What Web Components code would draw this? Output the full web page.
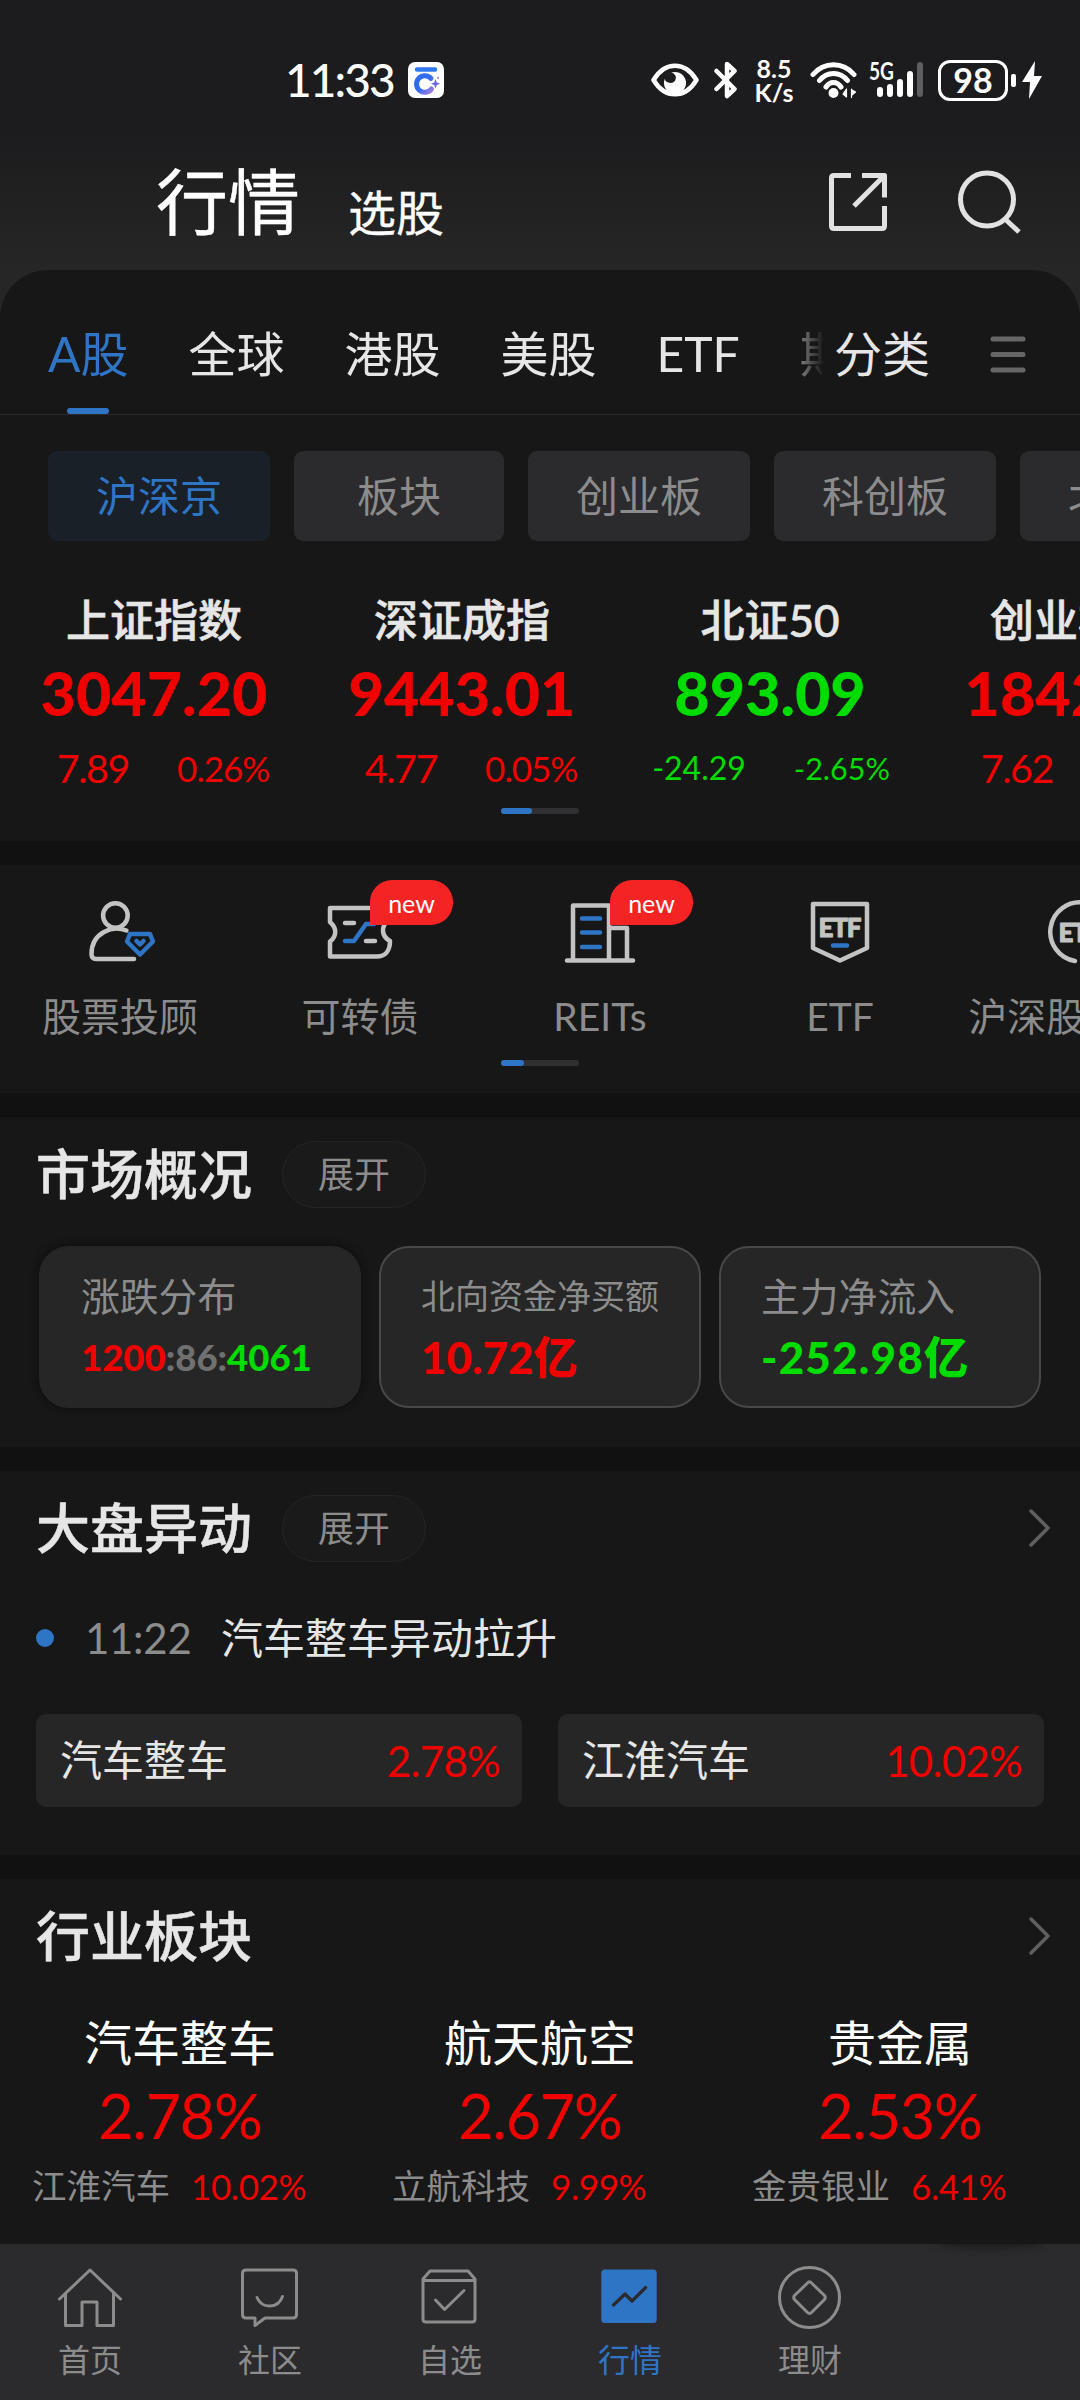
<!DOCTYPE html>
<html lang="zh-CN">
<head>
<meta charset="UTF-8">
<title>行情</title>
<style>
    :root {
        --panel: #171717;
        --gap: #111111;
        --card: #262626;
        --bar: #2b2b2d;
        --blue: #2f75c6;
        --red: #f10000;
        --green: #00dc00;
        --text: #e6e6e6;
        --muted: #8c8c8c;
    }

    body {
        margin: 0;
        width: 1080px;
        height: 2400px;
        overflow: hidden;
        background: var(--gap);
        color: var(--text);
        font-family: Lato, "Noto Sans CJK SC", sans-serif;
    }
</style>
</head>
<body>
<market-app></market-app>

<script>
/**
 * Registers a custom element whose shadow root is cloned from a template
 */
function define(name, html, setup) {
    const template = document.createElement("template");
    template.innerHTML = `
        <style>
            *, :host { box-sizing: border-box; }
            svg { display: block; fill: none; stroke-linecap: round; stroke-linejoin: round; flex: none; }
        </style>
        ${html}
    `;

    customElements.define(name, class extends HTMLElement {
        constructor() {
            super();
            const shadow = this.attachShadow({ mode: "open" });
            shadow.append(template.content.cloneNode(true));
        }

        connectedCallback() {
            if (setup) setup(this, this.shadowRoot);
        }
    });
}

// icons for the quick actions, 72 x 64
const actionIcons = {
    advisor: `
        <circle cx="31.4" cy="15.5" r="12.3"/>
        <path d="M42.5 30.5C36 28 27 28 20 32C10 37.500 7.500 46 7.500 54Q7.500 59 12 59H50"/>
        <path class="blue" d="M46 34H66L69 41.500L56 54.500L43 41.500Z"/>
        <path class="blue" d="M52.500 41L56 44.500L59.500 41"/>`,
    bond: `
        <path d="M6 8H64V20C57 27 57 36 66 41C66 51 61 56.500 53 56.500H6V41.500C13 36 13 28 6 22Z"/>
        <path d="M21 23H30M42 41H51"/>
        <path class="blue" d="M21 41H30L42 24H50"/>`,
    reits: `
        <path d="M3 60.500H69M9 60V5.500H45V60M45 28H63V60"/>
        <path class="blue" d="M18 18.500H36M18 32.500H36M18 47H36"/>`,
    etf: `
        <path d="M9 4H63V48L36 60.500L9 48Z"/>
        <text x="14.5" y="36.500" textLength="43">ETF</text>
        <path class="blue" d="M29 45.500H43"/>`,
    connect: `
        <path d="M31 61A29.500 29.500 0 1 1 65 36"/>
        <text x="14.5" y="42" textLength="43">ETF</text>`,
};

// icons for the bottom bar, 64 x 64
const navIcons = {
    home: `<path d="M1.500 33L32 4L62.500 33M7.500 27.500V59.500H24V36H39V59.500H55.500V27.500"/>`,
    social: `
        <path d="M8 4H55Q58.500 4 58.500 7.500V48.500Q58.500 52 55 52H27L17 59.500V52H8Q4.500 52 4.500 48.500V7.500Q4.500 4 8 4Z"/>
        <path d="M19 31.500C24 43 40 43 44.500 30.500"/>`,
    watch: `
        <path d="M5 13L12 5H50L57 13V53Q57 56 54 56H8Q5 56 5 53ZM6 14.500H56"/>
        <path d="M17.500 34L26.600 43.500L46 24.500"/>`,
    market: `
        <rect x="3.300" y="3.500" width="55.400" height="53.500" rx="3.500" fill="#2f75c6" stroke="none"/>
        <path d="M15.500 39L27 28L34 35L47.700 21.500" stroke="#2b2b2d" stroke-width="3.200"/>`,
    wealth: `
        <circle cx="31.500" cy="31.500" r="30"/>
        <path d="M29.500 17Q31.500 14.500 33.500 17L46.500 29.500Q48 31.500 46.500 33.500L33.500 46.500Q31.500 48.500 29.500 46.500L16.500 33.500Q15 31.500 16.500 29.500Z"/>`,
};

define("status-bar", `
    <style>
        :host {
            display: flex;
            align-items: center;
            height: 158px;
            padding: 2px 38px 0 285px;
            color: #fff;
        }
        .time { font-size: 46px; line-height: 46px; font-weight: 500; width: 123px; letter-spacing: -1.9px; }
        .icons { display: flex; align-items: center; margin-left: auto; }
        svg { stroke: #fff; }
        .speed { font-size: 25px; line-height: 24px; font-weight: 700; text-align: center; width: 40px; margin: 0 16px; }
        .battery {
            display: flex; align-items: center; justify-content: center;
            width: 70px; height: 41px; border: 3px solid #fff; border-radius: 12px;
            font-size: 34px; line-height: 34px; font-weight: 700;
        }
        .nub { width: 5px; height: 13px; border-radius: 2px; background: #fff; margin: 0 6px 0 3px; }
        text { fill: #fff; stroke: none; font-size: 25px; font-weight: 700; }
    </style>
    <div class="time">11:33</div>
    <svg width="36" height="36" viewBox="0 0 36 36" stroke="none">
        <defs>
            <linearGradient id="g" x1="0" y1="0" x2="1" y2="1">
                <stop offset=".5" stop-color="#2f6cf0"/><stop offset="1" stop-color="#a57be0"/>
            </linearGradient>
        </defs>
        <rect width="36" height="36" rx="7" fill="#fff" stroke="none"/>
        <path d="M9 7.500H27" stroke="#2f78f0" stroke-width="4.500"/>
        <path d="M23 16.500A8.300 8.300 0 1 0 23.500 27" stroke="url(#g)" stroke-width="5"/>
        <path d="M27.500 17L28.800 20.500L32 21.800L28.800 23L27.500 26.500L26.200 23L23 21.800L26.200 20.500ZM30 14.500L31 16L30 17L29 16Z" fill="#6a63dc" stroke="none"/>
    </svg>
    <div class="icons">
        <svg width="48" height="34" viewBox="0 0 48 34" stroke-width="4.5">
            <path d="M2.500 17C14 -2 34 -2 45.500 17C34 36 14 36 2.500 17Z"/>
            <circle cx="24" cy="20" r="11" fill="#fff" stroke="none"/>
            <path d="M13 14L20 9Q27 12 24 18Q20 22 14.500 18Z" fill="#1c1c1e" stroke="none"/>
        </svg>
        <svg width="24" height="38" viewBox="0 0 24 38" stroke-width="4.5" style="margin-left:15px">
            <path d="M2.500 10L20.500 28L13 35V3L20.500 10L2.500 28"/>
        </svg>
        <div class="speed">8.5<br>K/s</div>
        <svg width="47" height="38" viewBox="0 0 47 38" stroke-width="5">
            <path d="M3 13.500C14 .5 33 .5 44 13.500M9.500 19.500C17 10 30 10 37.500 19.500M16 26C20 20 27 20 31 26"/>
            <circle cx="23.500" cy="32" r="5" fill="#fff" stroke="none"/>
            <path d="M36.500 28V36L33 33ZM41.500 28V36.500M42 29L45.500 31L42 34Z" fill="#fff" stroke="#fff" stroke-width="1.200"/>
        </svg>
        <svg width="54" height="40" viewBox="0 0 54 40" stroke-width="6" style="margin:0 15px 0 12px">
            <path d="M11 30V34M21 27V34M31 22V34M41 14V34"/>
            <path d="M51 5V34" stroke="#5e5e60"/>
            <text x="0" y="20" textLength="25" lengthAdjust="spacingAndGlyphs">5G</text>
        </svg>
        <div class="battery">98</div>
        <div class="nub"></div>
        <svg width="20" height="38" viewBox="0 0 20 38" stroke="none">
            <path d="M13 0L0 21H8L7 38L20 15H12Z" fill="#fff" stroke="none"/>
        </svg>
    </div>
`);

define("page-header", `
    <style>
        :host {
            display: flex;
            align-items: flex-end;
            height: 112px;
            padding: 0 58px 33px 156px;
            color: #fff;
        }
        .title { font-size: 72px; line-height: 72px; -webkit-text-stroke: .4px #fff; margin-right: 48px; }
        .link { font-size: 48px; line-height: 48px; -webkit-text-stroke: .3px #fff; }
        .tools { display: flex; align-items: center; gap: 71px; margin: 0 0 3px auto; }
        svg { stroke: #e2e2e2; stroke-width: 5; stroke-linecap: butt; }
    </style>
    <div class="title">行情</div>
    <div class="link">选股</div>
    <div class="tools">
        <svg width="58" height="58" viewBox="0 0 58 58">
            <path d="M22 2.500H5Q2.500 2.500 2.500 5V53Q2.500 55.500 5 55.500H53Q55.500 55.500 55.500 53V33M33 2.500H55.500V24.500M54 4L25 33"/>
        </svg>
        <svg width="64" height="64" viewBox="0 0 64 64">
            <circle cx="29" cy="29.500" r="26.500"/>
            <path d="M47 49L61 62"/>
        </svg>
    </div>
`);

define("market-tab", `
    <style>
        :host {
            display: flex;
            flex-direction: column;
            align-items: center;
            flex: none;
            height: 144px;
            padding-top: 60px;
            font-size: 48px;
            line-height: 48px;
            white-space: nowrap;
        }
        :host([active]) { color: var(--blue); }
        :host([active])::after {
            content: "";
            width: 42px;
            height: 6px;
            margin-top: auto;
            border-radius: 3px;
            background: var(--blue);
        }
    </style>
    <slot></slot>
`);

define("market-tabs", `
    <style>
        :host { display: flex; height: 145px; border-bottom: 1px solid #2b2b2b; }
        .scroll {
            display: flex; gap: 60px; width: 824px; padding-left: 48px; overflow: hidden;
            -webkit-mask-image: linear-gradient(90deg, #000 745px, rgba(0,0,0,.5) 800px, transparent 824px);
            mask-image: linear-gradient(90deg, #000 745px, rgba(0,0,0,.5) 800px, transparent 824px);
        }
        .fixed { margin-left: 10px; }
        svg { margin: 66px 53px 0 auto; stroke: #666; stroke-width: 5; }
    </style>
    <div class="scroll"><slot></slot></div>
    <market-tab class="fixed">分类</market-tab>
    <svg width="38" height="38" viewBox="0 0 38 38"><path d="M4 3H34M4 18.500H34M4 34H34"/></svg>
`);

define("filter-chip", `
    <style>
        :host {
            flex: none;
            min-width: 210px;
            height: 90px;
            padding: 0 48px;
            border-radius: 9px;
            background: var(--bar);
            color: var(--muted);
            font-size: 42px;
            line-height: 90px;
            text-align: center;
            white-space: nowrap;
        }
        :host([active]) { background: #1a2027; color: var(--blue); }
    </style>
    <slot></slot>
`);

define("scroll-hint", `
    <style>
        :host { display: block; width: 78px; height: 6px; margin: 0 auto; border-radius: 3px; background: #303032; }
        div { width: var(--thumb, 31px); height: 6px; border-radius: 3px; background: var(--blue); }
    </style>
    <div></div>
`);

define("index-quote", `
    <style>
        :host { display: block; flex: none; width: 308px; text-align: center; color: var(--red); white-space: nowrap; }
        :host([down]) { color: var(--green); }
        .name { font-size: 44px; line-height: 50px; font-weight: 500; -webkit-text-stroke: .6px currentColor; color: var(--text); }
        .value { font-size: 61px; line-height: 60px; font-weight: 900; margin: 18px 0 25px; }
        .change { display: flex; justify-content: center; gap: 48px; height: 40px; line-height: 40px; padding-left: 18px; }
        .diff { font-size: 39.5px; letter-spacing: -1.4px; }
        .rate { font-size: 35px; letter-spacing: -1px; }
        :host([down]) .diff { font-size: 32px; letter-spacing: 0; }
        :host([down]) .rate { font-size: 30.5px; letter-spacing: 0; }
        :host([down]) .change { padding-left: 2px; }
    </style>
    <div class="name"><slot></slot></div>
    <div class="value"><slot name="value"></slot></div>
    <div class="change">
        <span class="diff"><slot name="diff"></slot></span>
        <span class="rate"><slot name="rate"></slot></span>
    </div>
`);

define("quick-action", `
    <style>
        :host { display: flex; flex-direction: column; align-items: center; position: relative; flex: none; width: 240px; padding-top: 35px; }
        svg { stroke: #c3c3c3; stroke-width: 4.5; margin-bottom: 32px; }
        .blue { stroke: var(--blue); }
        text { fill: #c3c3c3; stroke: #c3c3c3; stroke-width: 1; font-size: 26px; font-weight: 900; }
        .label { font-size: 39px; line-height: 40px; color: var(--muted); white-space: nowrap; }
        .badge {
            display: none;
            position: absolute; left: 130px; top: 15px;
            width: 83px; height: 45px;
            border-radius: 22px 22px 22px 0;
            background: #f52424; color: #fff;
            font-size: 25px; line-height: 47px; text-align: center;
        }
        :host([badge]) .badge { display: block; }
    </style>
    <svg width="72" height="64" viewBox="0 0 72 64"></svg>
    <div class="label"><slot></slot></div>
    <div class="badge"></div>
`, (host, root) => {
    root.querySelector("svg").innerHTML = actionIcons[host.getAttribute("icon")];
    root.querySelector(".badge").textContent = host.getAttribute("badge") || "";
});

define("section-block", `
    <style>
        :host { display: block; background: var(--panel); margin-bottom: 24px; overflow: hidden; }
        .head { display: flex; align-items: center; height: 114px; padding: 0 28px 0 36px; }
        .title { font-size: 54px; line-height: 60px; font-weight: 500; -webkit-text-stroke: .5px currentColor; padding-top: 2px; }
        .pill {
            width: 144px; height: 67px; margin-left: 30px;
            border: 1px solid #252525; border-radius: 34px; background: #1a1a1a;
            color: var(--muted); font-size: 36px; line-height: 65px; text-align: center;
        }
        svg { margin-left: auto; stroke: #606060; stroke-width: 3.5; }
        :host(:not([expand])) .pill, :host(:not([more])) svg { display: none; }
    </style>
    <div class="head">
        <div class="title"><slot name="title"></slot></div>
        <div class="pill">展开</div>
        <svg width="24" height="40" viewBox="0 0 24 40"><path d="M3 3L20 20L3 37"/></svg>
    </div>
    <slot></slot>
`);

define("stat-card", `
    <style>
        :host {
            display: block;
            width: 322px;
            height: 162px;
            padding: 28px 0 0 40px;
            border: 2px solid #484848;
            border-radius: 30px;
            background: var(--card);
            white-space: nowrap;
        }
        :host([raised]) { border-color: var(--card); box-shadow: 0 0 8px #0c0c0c; }
        .label { font-size: 38.8px; line-height: 40px; color: var(--muted); }
        .value { font-size: 44px; line-height: 50px; font-weight: 900; margin-top: 16px; }
        :host([long]) .label { font-size: 34px; }
        :host([wide]) .value { letter-spacing: 1.2px; }
        :host([raised]) .value { font-size: 36.5px; }
    </style>
    <div class="label"><slot></slot></div>
    <div class="value"><slot name="value"></slot></div>
`);

define("event-line", `
    <style>
        :host { display: flex; align-items: center; height: 106px; padding-left: 36px; font-size: 42px; line-height: 42px; }
        i { width: 18px; height: 18px; border-radius: 50%; background: var(--blue); margin-right: 31px; }
        .time { width: 136px; color: var(--muted); letter-spacing: -.3px; }
    </style>
    <i></i>
    <div class="time"><slot name="time"></slot></div>
    <div><slot></slot></div>
`);

define("stock-box", `
    <style>
        :host {
            display: flex; justify-content: space-between; flex: 1;
            height: 93px; padding: 0 22px 0 24px; border-radius: 10px;
            background: var(--card); font-size: 42px; line-height: 93px;
        }
        .rate { color: var(--red); letter-spacing: -.7px; padding-top: 1px; }
    </style>
    <div><slot></slot></div>
    <div class="rate"><slot name="rate"></slot></div>
`);

define("sector-quote", `
    <style>
        :host { display: block; width: 360px; text-align: center; color: var(--red); }
        .name { font-size: 48px; line-height: 50px; color: #fff; }
        .rate { font-size: 61px; line-height: 60px; letter-spacing: -1.2px; margin: 18px 0 20px; }
        .leader { display: flex; gap: 21px; padding-left: 32px; font-size: 35px; line-height: 40px; letter-spacing: -.4px; }
        .stock { font-size: 34.5px; letter-spacing: 0; color: var(--muted); }
    </style>
    <div class="name"><slot></slot></div>
    <div class="rate"><slot name="rate"></slot></div>
    <div class="leader">
        <span class="stock"><slot name="stock"></slot></span>
        <span><slot name="stock-rate"></slot></span>
    </div>
`);

define("nav-item", `
    <style>
        :host { display: flex; flex-direction: column; align-items: center; width: 180px; padding-top: 22px; color: var(--muted); font-size: 32px; line-height: 34px; }
        :host([active]) { color: var(--blue); }
        svg { stroke: currentColor; stroke-width: 3; margin-bottom: 13px; }
    </style>
    <svg width="64" height="64" viewBox="0 0 64 64"></svg>
    <slot></slot>
`, (host, root) => {
    root.querySelector("svg").innerHTML = navIcons[host.getAttribute("icon")];
});

define("nav-bar", `
    <style>
        :host { display: flex; position: relative; height: 156px; background: var(--bar); overflow: hidden; }
        /* soft shade on the empty slot at the end of the bar */
        .shade { position: absolute; right: 35px; top: -8px; width: 110px; height: 12px; background: #1a1b1a; filter: blur(4px); border-radius: 50%; }
    </style>
    <slot></slot>
    <div class="shade"></div>
`);

/**
 * The whole screen
 */
define("market-app", `
    <style>
        :host { display: block; width: 1080px; height: 2400px; overflow: hidden; }
        .top { background: linear-gradient(#1c1c1e 0, #1c1c1e 130px, #262626 270px); }
        .sheet { background: #262626; margin-bottom: 24px; }
        .sheet > div { height: 571px; border-radius: 48px 48px 0 0; background: var(--panel); overflow: hidden; }
        .row { display: flex; overflow: hidden; }
        .chips { gap: 24px; padding: 36px 0 0 48px; }
        .indices { padding-top: 54px; margin-bottom: 20px; }
        .actions { height: 228px; margin-bottom: 24px; background: var(--panel); }
        .actions .row { height: 195px; }
        .cards { display: flex; gap: 18px; padding: 15px 0 39px 39px; }
        .boxes { display: flex; gap: 36px; padding: 23px 36px 48px; }
        .sectors { display: flex; height: 251px; padding-top: 25px; }
        .last { margin-bottom: 0; }
        .up { color: var(--red); }
        .flat { color: #707070; }
        .down { color: var(--green); }
    </style>

    <div class="top">
        <status-bar></status-bar>
        <page-header></page-header>
    </div>

    <div class="sheet"><div>
        <market-tabs>
            <market-tab active>A股</market-tab>
            <market-tab>全球</market-tab>
            <market-tab>港股</market-tab>
            <market-tab>美股</market-tab>
            <market-tab>ETF</market-tab>
            <market-tab>期</market-tab>
        </market-tabs>
        <div class="row chips">
            <filter-chip active>沪深京</filter-chip>
            <filter-chip>板块</filter-chip>
            <filter-chip>创业板</filter-chip>
            <filter-chip>科创板</filter-chip>
            <filter-chip>北交所</filter-chip>
        </div>
        <div class="row indices">
            <index-quote>上证指数<span slot="value">3047.20</span><span slot="diff">7.89</span><span slot="rate">0.26%</span></index-quote>
            <index-quote>深证成指<span slot="value">9443.01</span><span slot="diff">4.77</span><span slot="rate">0.05%</span></index-quote>
            <index-quote down>北证50<span slot="value">893.09</span><span slot="diff">-24.29</span><span slot="rate">-2.65%</span></index-quote>
            <index-quote>创业板指<span slot="value">1842.20</span><span slot="diff">7.62</span><span slot="rate">0.42%</span></index-quote>
        </div>
        <scroll-hint></scroll-hint>
    </div></div>

    <div class="actions">
        <div class="row">
            <quick-action icon="advisor">股票投顾</quick-action>
            <quick-action icon="bond" badge="new">可转债</quick-action>
            <quick-action icon="reits" badge="new">REITs</quick-action>
            <quick-action icon="etf">ETF</quick-action>
            <quick-action icon="connect">沪深股通ETF</quick-action>
        </div>
        <scroll-hint style="--thumb: 23px"></scroll-hint>
    </div>

    <section-block expand>
        <span slot="title">市场概况</span>
        <div class="cards">
            <stat-card raised>涨跌分布<span slot="value"><span class="up">1200</span><span class="flat">:86:</span><span class="down">4061</span></span></stat-card>
            <stat-card long>北向资金净买额<span slot="value" class="up">10.72亿</span></stat-card>
            <stat-card wide>主力净流入<span slot="value" class="down">-252.98亿</span></stat-card>
        </div>
    </section-block>

    <section-block expand more>
        <span slot="title">大盘异动</span>
        <event-line><span slot="time">11:22</span>汽车整车异动拉升</event-line>
        <div class="boxes">
            <stock-box>汽车整车<span slot="rate">2.78%</span></stock-box>
            <stock-box>江淮汽车<span slot="rate">10.02%</span></stock-box>
        </div>
    </section-block>

    <section-block more class="last">
        <span slot="title">行业板块</span>
        <div class="sectors">
            <sector-quote>汽车整车<span slot="rate">2.78%</span><span slot="stock">江淮汽车</span><span slot="stock-rate">10.02%</span></sector-quote>
            <sector-quote>航天航空<span slot="rate">2.67%</span><span slot="stock">立航科技</span><span slot="stock-rate">9.99%</span></sector-quote>
            <sector-quote>贵金属<span slot="rate">2.53%</span><span slot="stock">金贵银业</span><span slot="stock-rate">6.41%</span></sector-quote>
        </div>
    </section-block>

    <nav-bar>
        <nav-item icon="home">首页</nav-item>
        <nav-item icon="social">社区</nav-item>
        <nav-item icon="watch">自选</nav-item>
        <nav-item icon="market" active>行情</nav-item>
        <nav-item icon="wealth">理财</nav-item>
    </nav-bar>
`);
</script>
</body>
</html>
